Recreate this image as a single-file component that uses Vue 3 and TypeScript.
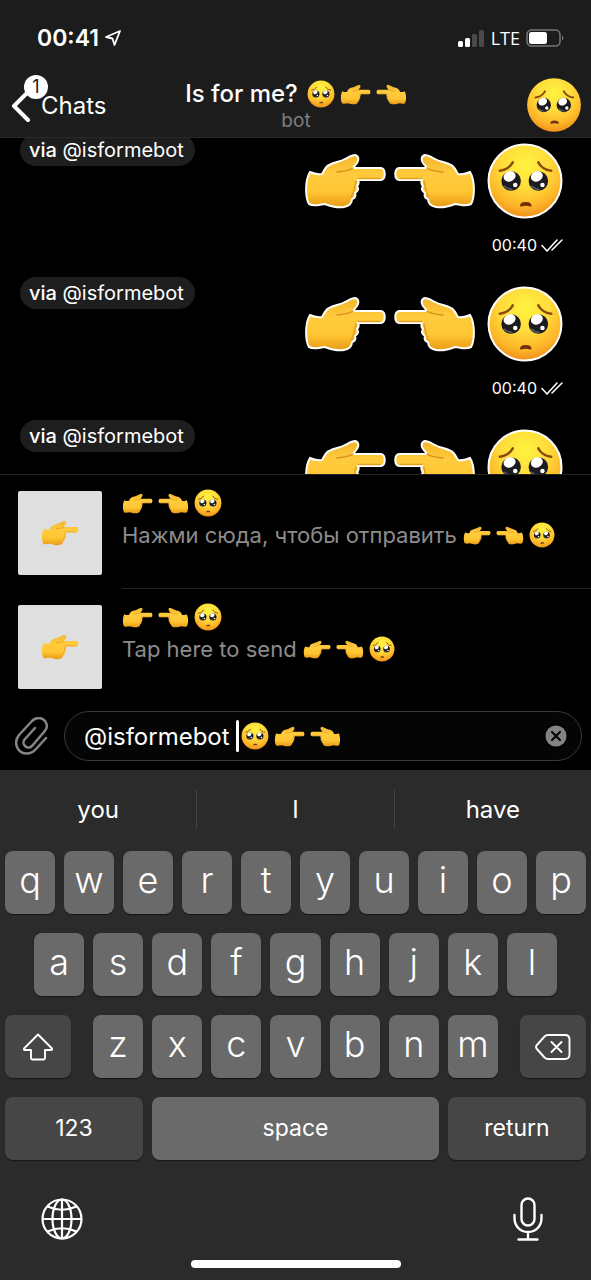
<script setup lang="ts">
import { ref } from 'vue'

type Glyph = 'face' | 'right' | 'left'

interface Message {
  id: number
  time?: string
}

interface Result {
  id: number
  caption: string
}

const handsThenFace: Glyph[] = ['right', 'left', 'face']
const faceThenHands: Glyph[] = ['face', 'right', 'left']

const messages: Message[] = [
  { id: 1, time: '00:40' },
  { id: 2, time: '00:40' },
  { id: 3 },
]

const results: Result[] = [
  { id: 1, caption: 'Нажми сюда, чтобы отправить' },
  { id: 2, caption: 'Tap here to send' },
]

const suggestions = ['you', 'I', 'have']
const topKeys = 'qwertyuiop'.split('')
const homeKeys = 'asdfghjkl'.split('')
const bottomKeys = 'zxcvbnm'.split('')

const draft = ref('@isformebot ')
</script>

<template>
  <div class="app">
    <svg class="defs" aria-hidden="true">
      <defs>
        <linearGradient id="skin" x1="0" y1="0" x2="0" y2="1">
          <stop offset="0" stop-color="#f3b52c" />
          <stop offset="0.35" stop-color="#ffcb3d" />
          <stop offset="0.7" stop-color="#ffc633" />
          <stop offset="1" stop-color="#e99a17" />
        </linearGradient>
        <radialGradient id="glow" cx="0.5" cy="0.28" r="0.72">
          <stop offset="0" stop-color="#fff33f" />
          <stop offset="0.45" stop-color="#ffdc3b" />
          <stop offset="0.8" stop-color="#fdb428" />
          <stop offset="1" stop-color="#f0901c" />
        </radialGradient>
        <symbol id="right" viewBox="-1 -1 82 56">
          <path d="M5 18Q11 21 17 20C19 17 20 13 24 11C29 8 35 8 40 5C44 3 47 1 50 1C54 2 54 6 52 9L48 14H76C81 15 81 25 76 26H53C54 28 54 30 52 32C54 35 53 37 50 39C51 42 50 44 47 45C47 49 44 52 39 53C32 54 25 52 20 50C15 50 10 53 4 50C0 43 0 26 5 18Z" fill="url(#skin)" />
          <path d="M32 18C39 17 44 17 48 14" fill="none" stroke="#d9931b" stroke-width="1.5" stroke-linecap="round" />
          <path d="M53 24.500H75M51 27L50 32L48.500 38L46 44" fill="none" stroke="#e3a024" stroke-width="1.5" stroke-linecap="round" />
        </symbol>
        <symbol id="left" viewBox="-1 -1 82 56">
          <g transform="translate(80 0) scale(-1 1)">
            <path d="M5 18Q11 21 17 20C19 17 20 13 24 11C29 8 35 8 40 5C44 3 47 1 50 1C54 2 54 6 52 9L48 14H76C81 15 81 25 76 26H53C54 28 54 30 52 32C54 35 53 37 50 39C51 42 50 44 47 45C47 49 44 52 39 53C32 54 25 52 20 50C15 50 10 53 4 50C0 43 0 26 5 18Z" fill="url(#skin)" />
            <path d="M32 18C39 17 44 17 48 14" fill="none" stroke="#d9931b" stroke-width="1.5" stroke-linecap="round" />
            <path d="M53 24.500H75M51 27L50 32L48.500 38L46 44" fill="none" stroke="#e3a024" stroke-width="1.5" stroke-linecap="round" />
          </g>
        </symbol>
        <symbol id="face" viewBox="-1 -1 74 74">
          <circle cx="36" cy="36" r="35.5" fill="url(#glow)" />
          <g fill="none" stroke="#8a4a0c" stroke-width="2.6" stroke-linecap="round">
            <path d="M11.500 26C17 25.500 22 22 24 18" />
            <path d="M61.500 26C56 25.500 51 22 49 18" />
          </g>
          <g fill="#1d1a20" stroke="none">
            <ellipse cx="22.500" cy="36" rx="9.500" ry="9.500" />
            <ellipse cx="49" cy="36" rx="9.500" ry="9.500" />
          </g>
          <g fill="none" stroke="#56636e" stroke-width="1.4" stroke-linecap="round">
            <path d="M16 41Q19 44 23 44" />
            <path d="M42.500 41Q45.500 44 49.500 44" />
          </g>
          <g fill="#fff" stroke="none">
            <ellipse cx="21" cy="31.500" rx="6" ry="5" transform="rotate(-25 21 31.500)" />
            <circle cx="26.500" cy="40" r="2.200" />
            <ellipse cx="47.500" cy="31.500" rx="6" ry="5" transform="rotate(-25 47.500 31.500)" />
            <circle cx="53" cy="40" r="2.200" />
          </g>
          <path d="M32 60C32.500 56.500 41 56.500 41.500 60Q37 58.500 32 60Z" fill="#74300d" stroke="#74300d" stroke-width="1.800" stroke-linejoin="round" />
        </symbol>
      </defs>
    </svg>

    <header class="top">
      <div class="status">
        <div class="clock">
          <span>00:41</span>
          <svg width="18" height="18" viewBox="0 0 18 18"><path d="M2 8L16 2L10.500 16L8.500 9.500Z" fill="none" stroke="#fff" stroke-width="1.800" stroke-linejoin="round" /></svg>
        </div>
        <div class="signals">
          <svg width="27" height="18" viewBox="0 0 27 18">
            <rect x="0" y="12" width="5" height="6" rx="1.500" fill="#fff" />
            <rect x="7" y="9" width="5" height="9" rx="1.500" fill="#fff" />
            <rect x="14" y="5" width="5" height="13" rx="1.500" fill="#4a4a4a" />
            <rect x="21" y="1" width="5" height="17" rx="1.500" fill="#4a4a4a" />
          </svg>
          <span class="network">LTE</span>
          <svg width="38" height="18" viewBox="0 0 38 18">
            <rect x="1" y="1" width="33" height="16" rx="4.500" fill="none" stroke="#777" stroke-width="1.500" />
            <rect x="3" y="3" width="18" height="12" rx="2.500" fill="#fff" />
            <path d="M36 6.500Q39 9 36 11.500Z" fill="#777" />
          </svg>
        </div>
      </div>
      <div class="nav">
        <button class="back" type="button">
          <svg width="22" height="34" viewBox="0 0 22 34"><path d="M18 4L4 18L18 32" fill="none" stroke="#fff" stroke-width="4" stroke-linecap="round" stroke-linejoin="round" /></svg>
          <span class="badge">1</span>
          <span class="back-label">Chats</span>
        </button>
        <div class="heading">
          <h1 class="title">
            <span>Is for me?</span>
            <span class="emojis">
              <svg v-for="g in faceThenHands" :key="g" :class="g === 'face' ? 'face' : 'hand'"><use :href="'#' + g" /></svg>
            </span>
          </h1>
          <p class="subtitle">bot</p>
        </div>
        <button class="avatar" type="button" aria-label="Profile">
          <svg><use href="#face" /></svg>
        </button>
      </div>
    </header>

    <main class="chat">
      <article v-for="m in messages" :key="m.id" class="message">
        <a class="via" href="#"><b>via</b> @isformebot</a>
        <div class="body">
          <div class="sticker">
            <svg v-for="g in handsThenFace" :key="g" :class="g === 'face' ? 'face' : 'hand'"><use :href="'#' + g" /></svg>
          </div>
          <div v-if="m.time" class="stamp">
            <span>{{ m.time }}</span>
            <svg width="22" height="14" viewBox="0 0 22 14"><path d="M1 7.500L6 13L16 2M11 12L21 2" fill="none" stroke="#fff" stroke-width="1.500" stroke-linecap="round" /></svg>
          </div>
        </div>
      </article>
    </main>

    <section class="results">
      <button v-for="r in results" :key="r.id" class="result" type="button">
        <span class="thumb"><svg><use href="#right" /></svg></span>
        <span class="info">
          <span class="emojis name">
            <svg v-for="g in handsThenFace" :key="g" :class="g === 'face' ? 'face' : 'hand'"><use :href="'#' + g" /></svg>
          </span>
          <span class="caption">
            <span>{{ r.caption }}</span>
            <span class="emojis small">
              <svg v-for="g in handsThenFace" :key="g" :class="g === 'face' ? 'face' : 'hand'"><use :href="'#' + g" /></svg>
            </span>
          </span>
        </span>
      </button>
    </section>

    <form class="composer" @submit.prevent>
      <button class="attach" type="button" aria-label="Attach">
        <svg width="34" height="38" viewBox="0 0 34 38"><path d="M31 21L21 32C16 38 7 38 3 32C0 27 1 22 4 18L17 4C21 0 27 0 30 4C33 8 32 12 29 15L17 29C15 31 12 31 10 29C8 27 8 24 10 22L20 11" fill="none" stroke="#858585" stroke-width="2.500" stroke-linecap="round" stroke-linejoin="round" /></svg>
      </button>
      <div class="field">
        <input v-model="draft" class="draft" type="text" aria-label="Message" />
        <span class="caret"></span>
        <span class="emojis typed">
          <svg v-for="g in faceThenHands" :key="g" :class="g === 'face' ? 'face' : 'hand'"><use :href="'#' + g" /></svg>
        </span>
        <button class="clear" type="button" aria-label="Clear" @click="draft = ''">
          <svg width="22" height="22" viewBox="0 0 22 22"><circle cx="11" cy="11" r="10.500" fill="#858585" /><path d="M7 7L15 15M15 7L7 15" stroke="#050505" stroke-width="2.200" stroke-linecap="round" /></svg>
        </button>
      </div>
    </form>

    <section class="keyboard">
      <div class="suggestions">
        <button v-for="s in suggestions" :key="s" class="suggestion" type="button">{{ s }}</button>
      </div>
      <div class="keys">
        <button v-for="k in topKeys" :key="k" class="key" type="button">{{ k }}</button>
      </div>
      <div class="keys inset">
        <button v-for="k in homeKeys" :key="k" class="key" type="button">{{ k }}</button>
      </div>
      <div class="keys spread">
        <button class="key dark square" type="button" aria-label="Shift">
          <svg width="32" height="30" viewBox="0 0 32 30"><path d="M16 2.500L30 16.500Q30.500 18 29 18H23V26Q23 27.500 21.500 27.500H10.500Q9 27.500 9 26V18H3Q1.500 18 2 16.500Z" fill="none" stroke="#fff" stroke-width="1.900" stroke-linejoin="round" /></svg>
        </button>
        <div class="letters">
          <button v-for="k in bottomKeys" :key="k" class="key" type="button">{{ k }}</button>
        </div>
        <button class="key dark square" type="button" aria-label="Delete">
          <svg width="36" height="28" viewBox="0 0 36 28"><path d="M13 2H30Q34.500 2 34.500 6.500V21.500Q34.500 26 30 26H13Q11 26 9.500 24.500L1.500 15.500Q0.500 14 1.500 12.500L9.500 3.500Q11 2 13 2ZM16.500 9L26.500 19M26.500 9L16.500 19" fill="none" stroke="#fff" stroke-width="1.900" stroke-linecap="round" stroke-linejoin="round" /></svg>
        </button>
      </div>
      <div class="keys">
        <button class="key dark word" type="button">123</button>
        <button class="key word space" type="button">space</button>
        <button class="key dark word" type="button">return</button>
      </div>
      <div class="tools">
        <button class="tool" type="button" aria-label="Switch keyboard">
          <svg width="42" height="42" viewBox="0 0 42 42" fill="none" stroke="#fff" stroke-width="2.200">
            <circle cx="21" cy="21" r="19.500" />
            <ellipse cx="21" cy="21" rx="9.500" ry="19.500" />
            <path d="M21 1.500V40.500M1.500 21H40.500M6.500 8.500Q21 15 35.500 8.500M6.500 33.500Q21 27 35.500 33.500" />
          </svg>
        </button>
        <button class="tool" type="button" aria-label="Dictate">
          <svg width="30" height="44" viewBox="0 0 30 44" fill="none" stroke="#fff" stroke-width="2.400" stroke-linecap="round">
            <rect x="8.500" y="1.500" width="13" height="27" rx="6.500" />
            <path d="M1.500 18V21C1.500 29 7 35 15 35S28.500 29 28.500 21V18M15 35V42.500M5.500 42.500H24.500" />
          </svg>
        </button>
      </div>
      <div class="home"></div>
    </section>
  </div>
</template>

<style>
body {
  margin: 0;
  background: #000;
}
</style>

<style scoped>
.app {
  display: flex;
  flex-direction: column;
  height: 100vh;
  background: #000;
  color: #fff;
  font-family: Inter, "Liberation Sans", sans-serif;
}
.defs {
  position: absolute;
  width: 0;
  height: 0;
}
button {
  display: flex;
  align-items: center;
  justify-content: center;
  margin: 0;
  padding: 0;
  border: 0;
  background: none;
  color: inherit;
  font: inherit;
}
svg {
  display: block;
  flex: none;
}
.top {
  flex: none;
  background: #1c1c1c;
  border-bottom: 1px solid #2a2a2a;
}
.status {
  display: flex;
  justify-content: space-between;
  align-items: center;
  height: 60px;
  padding: 16px 27px 0 37px;
  box-sizing: border-box;
}
.clock,
.signals {
  display: flex;
  align-items: center;
}
.clock {
  gap: 5px;
  font-size: 23px;
  font-weight: 600;
}
.signals {
  gap: 6px;
}
.network {
  font-family: "Open Sans", "Noto Sans", sans-serif;
  font-size: 18px;
  font-weight: 500;
}
.nav {
  display: grid;
  grid-template-columns: 1fr auto 1fr;
  align-items: end;
  height: 77px;
  padding: 0 9px 4px 10px;
  box-sizing: border-box;
}
.back {
  position: relative;
  justify-self: start;
  gap: 9px;
  padding-bottom: 11px;
  font-size: 24px;
}
.badge {
  position: absolute;
  left: 14px;
  top: -13px;
  width: 24px;
  height: 24px;
  border-radius: 12px;
  background: #fff;
  color: #1c1c1c;
  font-size: 18px;
  line-height: 24px;
  text-align: center;
}
.heading {
  text-align: center;
}
.title {
  display: flex;
  align-items: center;
  gap: 9px;
  margin: 0;
  font-size: 24px;
  line-height: 30px;
  font-weight: 500;
}
.subtitle {
  margin: 0;
  color: #7f7f7f;
  font-size: 19px;
  line-height: 24px;
}
.avatar svg {
  width: 56px;
  height: 56px;
}
.avatar {
  justify-self: end;
}
.emojis {
  display: flex;
  align-items: center;
  gap: 5px;
}
.emojis .face {
  width: 28px;
  height: 28px;
}
.emojis .hand {
  width: 31px;
  height: 21px;
}
.chat {
  flex: 1;
  min-height: 0;
  overflow: hidden;
}
.message {
  display: flex;
  justify-content: space-between;
  align-items: flex-start;
  height: 143px;
  padding: 0 28px 0 20px;
  box-sizing: border-box;
}
.message:first-child {
  margin-top: -4px;
}
.via {
  padding: 0 11px 0 9px;
  border-radius: 17px;
  background: #1e1e1e;
  color: #fff;
  font-size: 20px;
  line-height: 32px;
  text-decoration: none;
}
.via b {
  font-weight: 500;
}
.body {
  padding-top: 9px;
}
.sticker {
  display: flex;
  align-items: center;
}
.sticker svg {
  stroke: #fff;
  stroke-width: 2px;
}
.sticker .hand {
  width: 82px;
  height: 56px;
  margin-right: 8px;
}
.sticker .face {
  width: 76px;
  height: 76px;
  margin-left: 3px;
}
.stamp {
  display: flex;
  align-items: center;
  justify-content: flex-end;
  gap: 4px;
  padding-top: 14px;
  font-size: 16px;
  line-height: 24px;
}
.results {
  flex: none;
  border-top: 1px solid #222;
}
.result {
  position: relative;
  align-items: flex-start;
  justify-content: flex-start;
  gap: 20px;
  width: 100%;
  height: 114px;
  padding: 16px 18px 0;
  text-align: left;
}
.result + .result::before {
  content: "";
  position: absolute;
  top: -1px;
  left: 122px;
  right: 0;
  height: 1px;
  background: #222;
}
.thumb {
  display: flex;
  flex: none;
  align-items: center;
  justify-content: center;
  width: 84px;
  height: 84px;
  border-radius: 2px;
  background: #dfdfdf;
}
.thumb svg {
  width: 38px;
  height: 26px;
}
.name {
  height: 24px;
}
.caption {
  display: flex;
  align-items: center;
  gap: 6px;
  height: 40px;
  color: #8c8c8c;
  font-size: 22px;
  white-space: nowrap;
}
.small .face {
  width: 26px;
  height: 26px;
}
.small .hand {
  width: 28px;
  height: 19px;
}
.composer {
  display: flex;
  flex: none;
  align-items: center;
  padding: 8px 9px 9px 15px;
  gap: 15px;
}
.field {
  display: flex;
  flex: 1;
  align-items: center;
  height: 50px;
  padding: 0 14px 0 19px;
  box-sizing: border-box;
  border: 1px solid #3a3a3a;
  border-radius: 25px;
  background: #050505;
}
.draft {
  width: 152px;
  height: 40px;
  padding: 0;
  border: 0;
  outline: 0;
  background: none;
  color: #fff;
  font: 400 24px Inter, "Liberation Sans", sans-serif;
}
.caret {
  width: 3px;
  height: 32px;
  margin-right: 2px;
  border-radius: 2px;
  background: #fff;
}
.clear {
  margin-left: auto;
}
.keyboard {
  flex: none;
  padding-bottom: 12px;
  background: #2b2b2b;
}
.suggestions {
  display: flex;
  height: 81px;
  padding-top: 20px;
  box-sizing: border-box;
}
.suggestion {
  flex: 1;
  height: 38px;
  font-size: 24px;
}
.suggestion + .suggestion {
  border-left: 1px solid #454545;
}
.keys {
  display: flex;
  gap: 9px;
  margin-bottom: 19px;
  padding: 0 5px;
}
.inset {
  padding: 0 34px;
}
.spread {
  gap: 22px;
}
.letters {
  display: flex;
  flex: 1;
  gap: 9px;
}
.key {
  flex: 1;
  min-width: 0;
  height: 63px;
  padding-bottom: 6px;
  border-radius: 8px;
  background: #6a6a6a;
  box-shadow: 0 1px 1px #171717;
  font-size: 36px;
  font-weight: 300;
}
.dark {
  background: #464646;
}
.square {
  flex: 0 0 66px;
  padding: 0;
}
.word {
  flex: 0 0 138px;
  padding: 0 0 2px;
  font-size: 23px;
  font-weight: 400;
}
.space {
  flex: 1;
}
.tools {
  display: flex;
  justify-content: space-between;
  padding: 18px 48px 0 41px;
}
.home {
  width: 210px;
  height: 8px;
  margin: 19px auto 0;
  border-radius: 4px;
  background: #fff;
}
</style>
